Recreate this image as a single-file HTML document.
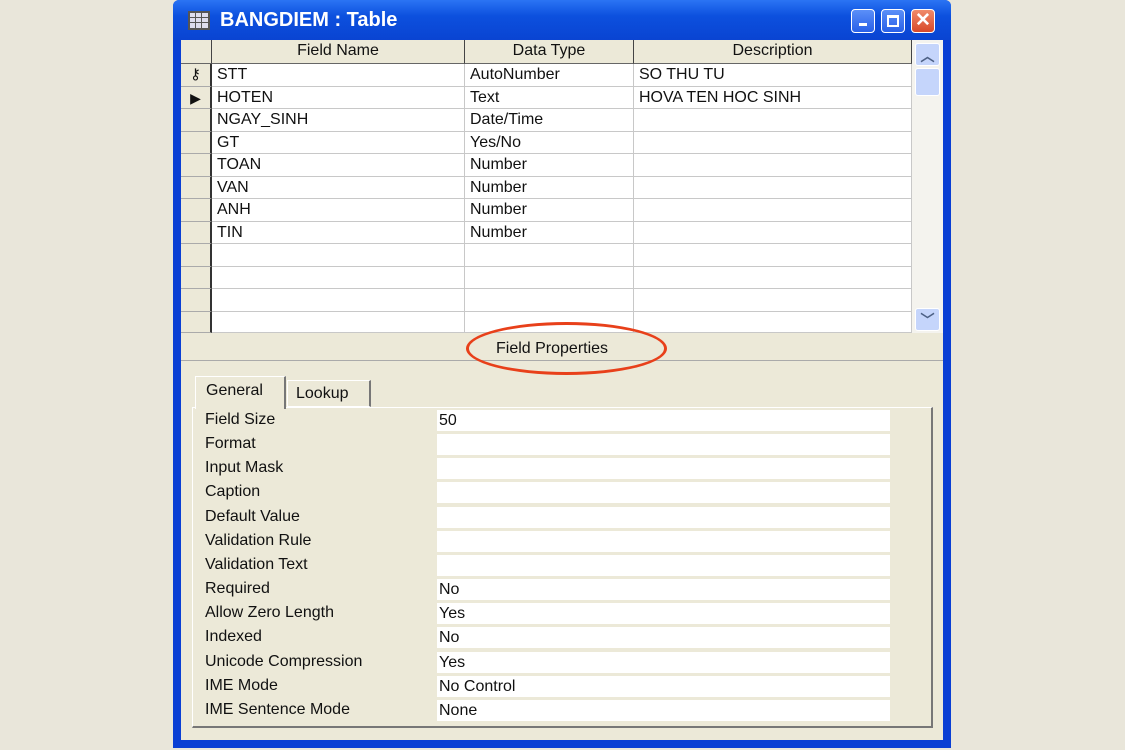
<!DOCTYPE html>
<html><head><style>
*{margin:0;padding:0;box-sizing:border-box}
body{width:1125px;height:750px;background:#e9e6da;position:relative;overflow:hidden;font-family:"Liberation Sans",sans-serif;font-size:16px;color:#111}
.a{position:absolute}
#win{left:173px;top:0;width:778px;height:748px;background:#0a3fd4;border-radius:6px 6px 0 0}
#title{left:173px;top:0;width:778px;height:40px;background:linear-gradient(#2b74f4,#0c50de 40%,#0a44d2);border-radius:6px 6px 0 0}
.t{color:#fff;font-weight:bold;font-size:20px;left:220px;top:9px}
.btn{top:9px;width:24px;height:24px;border:1px solid #fff;border-radius:4px;background:linear-gradient(#5b8ff8,#2860e8)}
#inner{left:181px;top:40px;width:762px;height:700px;background:#ece9d8}
.cell{position:absolute;border-right:1px solid #c8c8c8;border-bottom:1px solid #c8c8c8;background:#fff;padding-left:5px;line-height:22px;white-space:nowrap}
.hd{background:#ece9d8;text-align:center;border-right:1px solid #444;border-bottom:1px solid #666;padding:0}
.sel{background:#ece9d8;border-right:2px solid #333;border-bottom:1px solid #aaa;padding:0}
.lbl{position:absolute;left:205px}
.val{position:absolute;left:437px;width:453px;height:21px;background:#fff;padding-left:2px;line-height:21px}
</style></head><body>
<div class="a" id="win"></div>
<div class="a" id="title"></div>
<div class="a" style="left:188px;top:11px;width:22px;height:19px;background:#dde;border:2px solid #555;background-image:linear-gradient(90deg,transparent 5px,#555 5px,#555 6px,transparent 6px,transparent 11px,#555 11px,#555 12px,transparent 12px),linear-gradient(transparent 4px,#555 4px,#555 5px,transparent 5px,transparent 9px,#555 9px,#555 10px,transparent 10px)"></div>
<div class="a t">BANGDIEM : Table</div>
<div class="a btn" style="left:851px"><div class="a" style="left:7px;top:13px;width:8px;height:3px;background:#fff"></div></div>
<div class="a btn" style="left:881px"><div class="a" style="left:5px;top:5px;width:12px;height:12px;border:2px solid #fff;border-top-width:3px"></div></div>
<div class="a btn" style="left:911px;background:linear-gradient(#f08a6a,#d8482a);color:#fff;font-weight:bold;font-size:19px;text-align:center;line-height:21px">✕</div>
<div class="a" id="inner"></div>
<div class="a" style="left:181px;top:40px;width:731px;height:293px;background:#fff"></div>
<div id="grid"></div>
<div class="a" style="left:912px;top:40px;width:31px;height:293px;background:#f4f3ee"></div>
<div class="a" style="left:915px;top:43px;width:25px;height:23px;background:#c5d5fb;border:1px solid #fff;border-radius:3px;text-align:center;color:#4d6185;font-size:14px;font-weight:bold;line-height:24px">︿</div>
<div class="a" style="left:915px;top:68px;width:25px;height:28px;background:#c5d5fb;border:1px solid #fff;border-radius:3px"></div>
<div class="a" style="left:915px;top:308px;width:25px;height:23px;background:#c5d5fb;border:1px solid #fff;border-radius:3px;text-align:center;color:#4d6185;font-size:14px;font-weight:bold;line-height:22px">﹀</div>
<div class="a" style="left:181px;top:360px;width:762px;height:1px;background:#aaa"></div>
<div class="a" style="left:496px;top:340px;font-size:16px">Field Properties</div>
<div class="a" style="left:466px;top:322px;width:201px;height:53px;border:3px solid #e8401a;border-radius:50%"></div>
<div class="a" style="left:192px;top:407px;width:741px;height:321px;border:1px solid #fff;border-right:2px solid #777;border-bottom:2px solid #777"></div>
<div class="a" style="left:195px;top:376px;width:91px;height:33px;border:1px solid #fff;border-right:2px solid #777;border-bottom:none;background:#ece9d8;padding:5px 0 0 10px">General</div>
<div class="a" style="left:287px;top:380px;width:84px;height:27px;border:1px solid #fff;border-right:2px solid #777;background:#ece9d8;padding:4px 0 0 8px">Lookup</div>
<div id="props"></div>
<script>
var g='',cols=[[181,31],[212,253],[465,169],[634,278]];
var hdr=['','Field Name','Data Type','Description'];
for(var c=0;c<4;c++)g+='<div class="cell hd" style="left:'+cols[c][0]+'px;top:40px;width:'+cols[c][1]+'px;height:24px">'+hdr[c]+'</div>';
var rows=[['STT','AutoNumber','SO THU TU'],['HOTEN','Text','HOVA TEN HOC SINH'],['NGAY_SINH','Date/Time',''],['GT','Yes/No',''],['TOAN','Number',''],['VAN','Number',''],['ANH','Number',''],['TIN','Number',''],['','',''],['','',''],['','',''],['','','']];
for(var r=0;r<12;r++){var y=Math.round(64+r*22.5),y2=Math.round(64+(r+1)*22.5),h=Math.min(y2,333)-y;
g+='<div class="cell sel" style="left:181px;top:'+y+'px;width:31px;height:'+h+'px;text-align:center">'+(r==0?'<span style="font-size:15px">⚷</span>':r==1?'<span style="font-size:14px">▶</span>':'')+'</div>';
for(var c=1;c<4;c++)g+='<div class="cell" style="left:'+cols[c][0]+'px;top:'+y+'px;width:'+cols[c][1]+'px;height:'+h+'px">'+rows[r][c-1]+'</div>';}
document.getElementById('grid').outerHTML=g;
var p=[['Field Size','50'],['Format',''],['Input Mask',''],['Caption',''],['Default Value',''],['Validation Rule',''],['Validation Text',''],['Required','No'],['Allow Zero Length','Yes'],['Indexed','No'],['Unicode Compression','Yes'],['IME Mode','No Control'],['IME Sentence Mode','None']];
var h='';for(var i=0;i<p.length;i++){var y=Math.round(410+i*24.15);
h+='<div class="lbl" style="top:'+(y+1)+'px">'+p[i][0]+'</div><div class="val" style="top:'+y+'px">'+p[i][1]+'</div>';}
document.getElementById('props').outerHTML=h;
</script>
</body></html>
